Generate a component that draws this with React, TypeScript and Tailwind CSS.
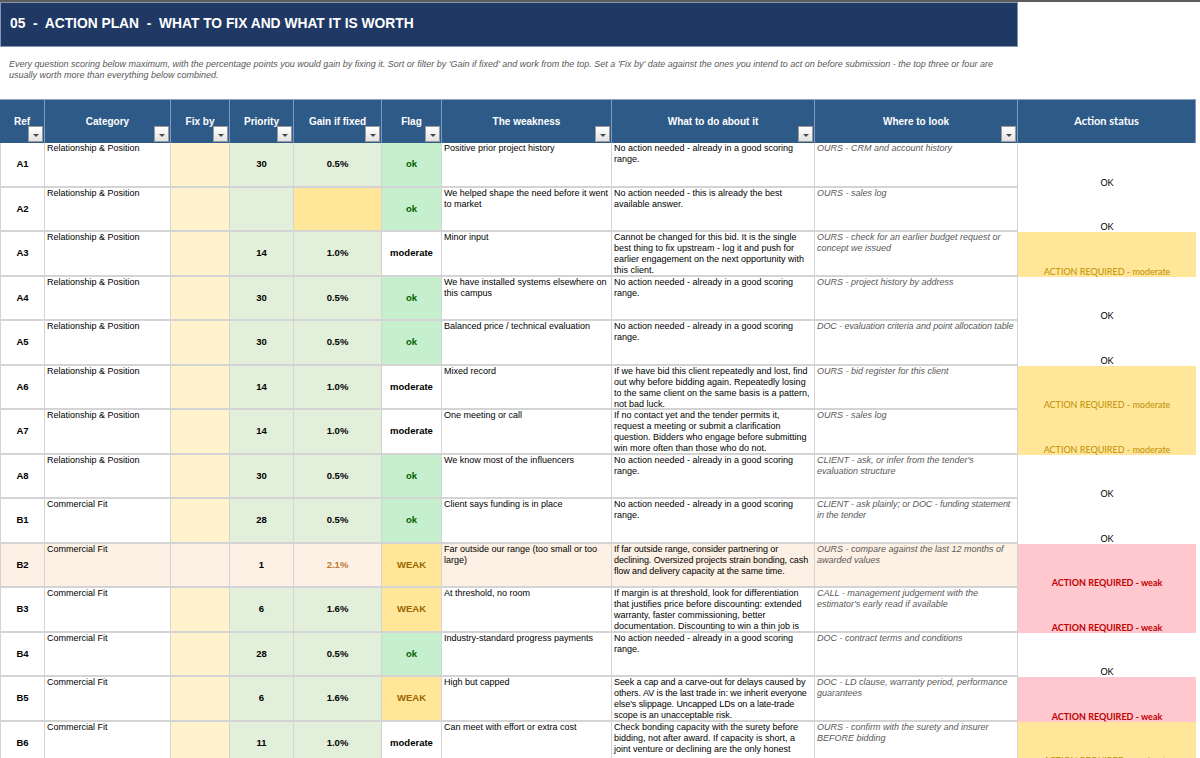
import React from 'react';

type Flag = 'ok' | 'moderate' | 'WEAK';
type Status = 'ok' | 'moderate' | 'weak';

interface Row {
  ref: string;
  category: string;
  priority: string;
  gain: string;
  flag: Flag;
  weakness: string;
  todo: string;
  where: string;
  status: Status;
  peach?: boolean;
  gainEmpty?: boolean;
  tightTodo?: boolean;
  tightWhere?: boolean;
}

const REL = 'Relationship & Position';
const COM = 'Commercial Fit';
const NO_ACTION = 'No action needed - already in a good scoring range.';

const rows: Row[] = [
  { ref: 'A1', category: REL, priority: '30', gain: '0.5%', flag: 'ok', weakness: 'Positive prior project history', todo: NO_ACTION, where: 'OURS - CRM and account history', status: 'ok' },
  { ref: 'A2', category: REL, priority: '', gain: '', flag: 'ok', weakness: 'We helped shape the need before it went to market', todo: 'No action needed - this is already the best available answer.', where: 'OURS - sales log', status: 'ok', gainEmpty: true },
  { ref: 'A3', category: REL, priority: '14', gain: '1.0%', flag: 'moderate', weakness: 'Minor input', todo: 'Cannot be changed for this bid. It is the single best thing to fix upstream - log it and push for earlier engagement on the next opportunity with this client.', where: 'OURS - check for an earlier budget request or concept we issued', status: 'moderate' },
  { ref: 'A4', category: REL, priority: '30', gain: '0.5%', flag: 'ok', weakness: 'We have installed systems elsewhere on this campus', todo: NO_ACTION, where: 'OURS - project history by address', status: 'ok' },
  { ref: 'A5', category: REL, priority: '30', gain: '0.5%', flag: 'ok', weakness: 'Balanced price / technical evaluation', todo: NO_ACTION, where: 'DOC - evaluation criteria and point allocation table', status: 'ok', tightWhere: true },
  { ref: 'A6', category: REL, priority: '14', gain: '1.0%', flag: 'moderate', weakness: 'Mixed record', todo: 'If we have bid this client repeatedly and lost, find out why before bidding again. Repeatedly losing to the same client on the same basis is a pattern, not bad luck.', where: 'OURS - bid register for this client', status: 'moderate' },
  { ref: 'A7', category: REL, priority: '14', gain: '1.0%', flag: 'moderate', weakness: 'One meeting or call', todo: 'If no contact yet and the tender permits it, request a meeting or submit a clarification question. Bidders who engage before submitting win more often than those who do not.', where: 'OURS - sales log', status: 'moderate' },
  { ref: 'A8', category: REL, priority: '30', gain: '0.5%', flag: 'ok', weakness: 'We know most of the influencers', todo: NO_ACTION, where: "CLIENT - ask, or infer from the tender's evaluation structure", status: 'ok' },
  { ref: 'B1', category: COM, priority: '28', gain: '0.5%', flag: 'ok', weakness: 'Client says funding is in place', todo: NO_ACTION, where: 'CLIENT - ask plainly; or DOC - funding statement in the tender', status: 'ok', tightWhere: true },
  { ref: 'B2', category: COM, priority: '1', gain: '2.1%', flag: 'WEAK', weakness: 'Far outside our range (too small or too large)', todo: 'If far outside range, consider partnering or declining. Oversized projects strain bonding, cash flow and delivery capacity at the same time.', where: 'OURS - compare against the last 12 months of awarded values', status: 'weak', peach: true, tightTodo: true },
  { ref: 'B3', category: COM, priority: '6', gain: '1.6%', flag: 'WEAK', weakness: 'At threshold, no room', todo: 'If margin is at threshold, look for differentiation that justifies price before discounting: extended warranty, faster commissioning, better documentation. Discounting to win a thin job is', where: "CALL - management judgement with the estimator's early read if available", status: 'weak' },
  { ref: 'B4', category: COM, priority: '28', gain: '0.5%', flag: 'ok', weakness: 'Industry-standard progress payments', todo: NO_ACTION, where: 'DOC - contract terms and conditions', status: 'ok' },
  { ref: 'B5', category: COM, priority: '6', gain: '1.6%', flag: 'WEAK', weakness: 'High but capped', todo: "Seek a cap and a carve-out for delays caused by others. AV is the last trade in: we inherit everyone else's slippage. Uncapped LDs on a late-trade scope is an unacceptable risk.", where: 'DOC - LD clause, warranty period, performance guarantees', status: 'weak', tightTodo: true },
  { ref: 'B6', category: COM, priority: '11', gain: '1.0%', flag: 'moderate', weakness: 'Can meet with effort or extra cost', todo: 'Check bonding capacity with the surety before bidding, not after award. If capacity is short, a joint venture or declining are the only honest', where: 'OURS - confirm with the surety and insurer BEFORE bidding', status: 'moderate' },
];

const headers: { label: string; filter: boolean }[] = [
  { label: 'Ref', filter: true },
  { label: 'Category', filter: true },
  { label: 'Fix by', filter: true },
  { label: 'Priority', filter: true },
  { label: 'Gain if fixed', filter: true },
  { label: 'Flag', filter: true },
  { label: 'The weakness', filter: true },
  { label: 'What to do about it', filter: true },
  { label: 'Where to look', filter: true },
  { label: 'Action status', filter: false },
];

const GRID = 'grid grid-cols-[45px_126px_59px_64px_88px_60px_170px_203px_203px_178px] w-[1196px]';

function FilterButton() {
  return (
    <div className="absolute right-[1px] bottom-[1px] w-[15px] h-[16px] border border-[#9a9a9a] bg-gradient-to-b from-white to-[#e2e2e2] flex items-center justify-center">
      <div className="w-0 h-0 border-l-[3px] border-r-[3px] border-t-[3px] border-l-transparent border-r-transparent border-t-[#4a4a4a] mt-[2px]" />
    </div>
  );
}

function FlagCell({ flag }: { flag: Flag }) {
  if (flag === 'ok') {
    return <div className="flex items-center justify-center bg-[#c6efce] text-[#006100] font-bold text-[9.5px] border-r border-b-2 border-[#d4d4d4]">ok</div>;
  }
  if (flag === 'WEAK') {
    return <div className="flex items-center justify-center bg-[#ffe699] text-[#9c6500] font-bold text-[9.5px] border-r border-b-2 border-[#d4d4d4]">WEAK</div>;
  }
  return <div className="flex items-center justify-center bg-white font-bold text-[9.5px] border-r border-b-2 border-[#d4d4d4]">moderate</div>;
}

function StatusCell({ status }: { status: Status }) {
  const common = "flex items-end justify-center text-[9px] leading-[10px] font-['Lato',sans-serif]";
  if (status === 'moderate') {
    return <div className={`${common} bg-[#ffe699] text-[#bf8f00]`}>ACTION REQUIRED - moderate</div>;
  }
  if (status === 'weak') {
    return <div className={`${common} bg-[#ffc7ce] text-[#c00000] font-bold`}>ACTION REQUIRED - weak</div>;
  }
  return <div className={`${common} bg-white text-black text-[9.5px]`}>OK</div>;
}

function DataRow({ row }: { row: Row }) {
  const base = row.peach ? 'bg-[#fdf0e4]' : 'bg-white';
  const green = row.peach ? 'bg-[#fdf0e4]' : 'bg-[#e2efda]';
  const fix = row.peach ? 'bg-[#fdf0e4]' : 'bg-[#fff2cc]';
  const line = 'border-r border-b-2 border-[#d4d4d4]';
  const text = 'px-[2px] text-[9px] leading-[11px] overflow-hidden';

  return (
    <div className={`${GRID} h-[44.5px]`}>
      <div className={`flex items-center justify-center font-bold text-[9.5px] ${base} ${line} border-l`}>{row.ref}</div>
      <div className={`${text} ${base} ${line}`}>{row.category}</div>
      <div className={`${fix} ${line}`} />
      <div className={`flex items-center justify-center font-bold text-[9.5px] ${green} ${line}`}>{row.priority}</div>
      <div
        className={`flex items-center justify-center font-bold text-[9.5px] ${line} ${
          row.gainEmpty ? 'bg-[#ffe699]' : green
        } ${row.peach ? 'text-[#c07a30]' : ''}`}
      >
        {row.gain}
      </div>
      <FlagCell flag={row.flag} />
      <div className={`${text} ${base} ${line}`}>{row.weakness}</div>
      <div className={`${text} ${row.tightTodo ? 'pr-0 tracking-[-0.08px]' : ''} ${base} ${line}`}>{row.todo}</div>
      <div className={`${text} ${row.tightWhere ? 'pr-0 tracking-[-0.08px]' : ''} italic text-[#595959] ${base} ${line}`}>
        {row.where}
      </div>
      <StatusCell status={row.status} />
    </div>
  );
}

export default function App() {
  return (
    <div className="w-[1200px] h-[758px] overflow-hidden bg-white text-black font-['Liberation_Sans',Arial,sans-serif]">
      {/* sheet top edge */}
      <div className="h-[2px] bg-[#5c5c5c]" />

      {/* Title banner */}
      <div className="w-[1018px] h-[45px] bg-[#203864] border border-[#8497b0] flex items-center pl-[9px]">
        <h1 className="text-white font-bold text-[13.8px] whitespace-pre">05  -  ACTION PLAN  -  WHAT TO FIX AND WHAT IT IS WORTH</h1>
      </div>

      {/* Intro */}
      <div className="h-[52px] pl-[9px] pt-[12px] text-[9px] leading-[11px] italic text-[#595959]">
        <p>
          Every question scoring below maximum, with the percentage points you would gain by fixing it. Sort or filter by 'Gain if fixed' and work from the top. Set a 'Fix by' date against the ones you intend to act on before submission - the top three or four are
        </p>
        <p>usually worth more than everything below combined.</p>
      </div>

      {/* Table header */}
      <div className={`${GRID} h-[44px] border-t border-[#8ea2bd]`}>
        {headers.map((h, i) => (
          <div
            key={h.label}
            className={`relative flex items-center justify-center bg-[#2e5a88] text-white font-bold border-r border-[#7f9cc0] ${
              i === 9 ? "font-['Lato',sans-serif] text-[11px]" : 'text-[10px]'
            }`}
          >
            {h.label}
            {h.filter && <FilterButton />}
          </div>
        ))}
      </div>

      {/* Rows */}
      <div className="border-r border-[#d4d4d4] w-[1196px]">
        {rows.map((r) => (
          <DataRow key={r.ref} row={r} />
        ))}
      </div>
    </div>
  );
}
